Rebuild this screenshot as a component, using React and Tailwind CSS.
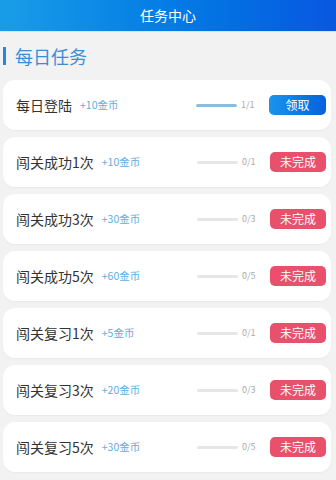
import React from 'react';

const tasks = [
  { name: '每日登陆', reward: '+10金币', done: 1, total: 1 },
  { name: '闯关成功1次', reward: '+10金币', done: 0, total: 1 },
  { name: '闯关成功3次', reward: '+30金币', done: 0, total: 3 },
  { name: '闯关成功5次', reward: '+60金币', done: 0, total: 5 },
  { name: '闯关复习1次', reward: '+5金币', done: 0, total: 1 },
  { name: '闯关复习3次', reward: '+20金币', done: 0, total: 3 },
  { name: '闯关复习5次', reward: '+30金币', done: 0, total: 5 },
];

const TaskRow = ({ task }) => {
  const complete = task.done >= task.total;
  return (
    <div className="h-[50px] bg-white rounded-xl shadow-[0_1px_2px_rgba(0,0,0,0.04)] flex items-center pl-[13px] pr-[5px]">
      <span className="text-[14px] text-[#333]">{task.name}</span>
      <span className="ml-[8px] text-[10.5px] text-[#5eaedf]">{task.reward}</span>
      <div className="ml-auto flex items-center">
        <div className="w-[41px] h-[3px] rounded-full bg-[#e6e6e6] overflow-hidden">
          <div
            className="h-full rounded-full bg-[#86bde2]"
            style={{ width: `${(task.done / task.total) * 100}%` }}
          />
        </div>
        <span className="ml-[4px] w-[24px] text-[9px] text-[#aaa]">
          {task.done}/{task.total}
        </span>
      </div>
      {complete ? (
        <button className="ml-[4px] w-[57px] h-[20px] rounded-[5px] bg-gradient-to-r from-[#1b94ec] to-[#0b5fdf] text-white text-[12px] leading-none">
          领取
        </button>
      ) : (
        <button className="ml-[4px] w-[56px] h-[20px] rounded-[5px] bg-[#e8506c] text-white text-[12px] leading-none">
          未完成
        </button>
      )}
    </div>
  );
};

export default function App() {
  return (
    <div
      className="w-[336px] h-[480px] overflow-hidden bg-[#f2f2f2]"
      style={{ fontFamily: '"Noto Sans CJK SC", "Noto Sans", sans-serif' }}
    >
      <div className="h-[32px] bg-gradient-to-r from-[#1a9de8] to-[#0a57e0] flex items-center justify-center border-b border-[#cfe6f7]">
        <span className="text-white text-[14px]">任务中心</span>
      </div>
      <div className="h-[48px] flex items-center pl-[3px]">
        <div className="w-[3px] h-[18px] bg-[#2a86d6]" />
        <span className="ml-[9px] text-[18px] text-[#3a8ed6]">每日任务</span>
      </div>
      <div className="flex flex-col gap-[7px] pl-[3px] pr-[5px]">
        {tasks.map((t) => (
          <TaskRow key={t.name} task={t} />
        ))}
      </div>
    </div>
  );
}
